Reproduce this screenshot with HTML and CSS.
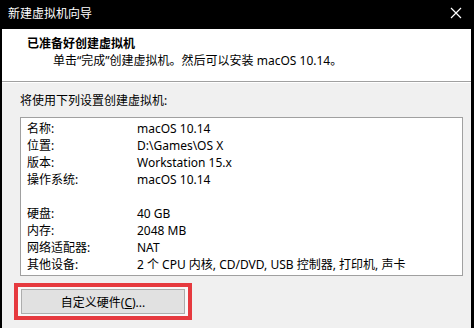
FILE: index.html
```html
<!DOCTYPE html>
<html>
<head>
    <meta charset="utf-8">
    <link rel="stylesheet" href="styles.css">
</head>
<body>
    <div class="window">
        <!-- barra de titulo -->
        <div class="titlebar">
            <span class="title">新建虚拟机向导</span>
            <svg class="close" width="12" height="12" viewBox="0 0 12 12">
                <path d="M1 1 L11 11 M11 1 L1 11" stroke="#fff" stroke-width="1.2" fill="none"/>
            </svg>
        </div>

        <div class="header">
            <div class="header-title">已准备好创建虚拟机</div>
            <div class="header-sub">单击“完成”创建虚拟机。然后可以安装 macOS 10.14。</div>
        </div>

        <div class="main">
            <div class="intro">将使用下列设置创建虚拟机:</div>
            <div class="summary">
                <div class="row"><span class="row_name">名称:</span><span class="row_value">macOS 10.14</span></div>
                <div class="row"><span class="row_name">位置:</span><span class="row_value">D:\Games\OS X</span></div>
                <div class="row"><span class="row_name">版本:</span><span class="row_value">Workstation 15.x</span></div>
                <div class="row"><span class="row_name">操作系统:</span><span class="row_value">macOS 10.14</span></div>
                <div class="row"></div>
                <div class="row"><span class="row_name">硬盘:</span><span class="row_value">40 GB</span></div>
                <div class="row"><span class="row_name">内存:</span><span class="row_value">2048 MB</span></div>
                <div class="row"><span class="row_name">网络适配器:</span><span class="row_value">NAT</span></div>
                <div class="row"><span class="row_name">其他设备:</span><span class="row_value">2 个 CPU 内核, CD/DVD, USB 控制器, 打印机, 声卡</span></div>
            </div>
            <div class="highlight">
                <button class="button">自定义硬件(<u>C</u>)...</button>
            </div>
        </div>
    </div>
</body>
</html>
```

FILE: styles.css
```css
body {
    margin: 0;
    background-color: #000000;
    font-family: 'Noto Sans', 'Noto Sans CJK SC', sans-serif;
    font-size: 12px;
    color: #000000;
}

.window {
    margin: 0 3px 0 2px;
    height: 328px;
    background-color: #f0f0f0;
    overflow: hidden;
}

/* barra de titulo */
.titlebar {
    height: 29px;
    background-color: #000000;
    display: flex;
    align-items: center;
    justify-content: space-between;
    padding: 0 9px 0 6px;
}

.title {
    color: #ffffff;
    line-height: 16px;
    margin-top: -2px;
}

.close {
    margin-top: -4px;
}

/* cabecera blanca */
.header {
    background-color: #ffffff;
    height: 46px;
    padding: 6px 0 0 25px;
    border-bottom: 1px solid #a0a0a0;
    box-shadow: 0 1px 0 #ffffff;
}

.header-title {
    font-weight: bold;
    line-height: 17px;
}

.header-sub {
    line-height: 17px;
    padding-left: 26px;
}

.main {
    padding: 10px 8px 0 18px;
}

.intro {
    line-height: 17px;
}

.summary {
    margin-top: 8px;
    background-color: #ffffff;
    border: 1px solid #a0a0a0;
    padding: 2px 6px 2px 6px;
    height: 153px;
}

.row {
    display: flex;
    height: 17px;
    line-height: 17px;
}

.row_name {
    width: 110px;
    flex-shrink: 0;
}

.highlight {
    display: inline-block;
    margin: 7px 0 0 -6px;
    border: 4px solid #e63a3f;
    padding: 2px 3px;
    background-color: #f8f8f8;
}

.button {
    display: block;
    width: 164px;
    height: 25px;
    background-color: #e1e1e1;
    border: 1px solid #adadad;
    font-family: 'Noto Sans', 'Noto Sans CJK SC', sans-serif;
    font-size: 12px;
    color: #000000;
    padding: 0;
    margin: 0;
}
```
